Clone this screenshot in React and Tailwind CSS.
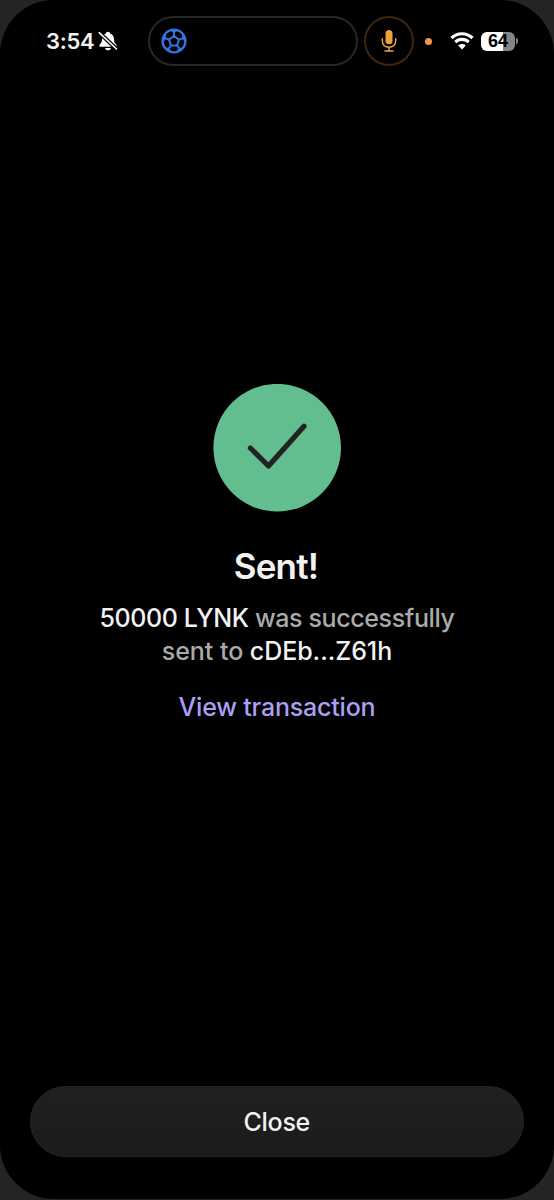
function MutedBell() {
  return (
    <svg className="ml-[4px]" width="20" height="20" viewBox="0 0 20 20">
      <path d="M10 .8c-1.200 0-2 .7-2.200 1.700C5.200 3.400 4.100 5.400 4 8.200c-.1 3-.8 4-2.200 5.300-.9.900-.5 2.300.7 2.300h15c1.200 0 1.600-1.400.7-2.300-1.400-1.300-2.100-2.300-2.200-5.300-.1-2.800-1.200-4.800-3.800-5.700C12 1.500 11.200.8 10 .8z" fill="white" />
      <path d="M7 17h6c-.3 1.400-1.500 2.300-3 2.300S7.300 18.400 7 17z" fill="white" />
      <path d="M1 1.500 18.500 18" stroke="black" strokeWidth="4" />
      <path d="M1.200 1.700 18.500 18" stroke="white" strokeWidth="1.600" strokeLinecap="round" />
    </svg>
  );
}

function Football() {
  return (
    <svg width="26" height="26" viewBox="0 0 26 26" fill="none" stroke="#3574e0" strokeWidth="2" strokeLinejoin="round">
      <circle cx="13" cy="13" r="11.400" strokeWidth="2.300" />
      <path d="m13 8 5 3.600-1.900 5.900H9.900L8 11.600z" />
      <path d="M13 8V4M18 11.600l3.600-1.200M16.100 17.500l2.200 3M9.900 17.500l-2.200 3M8 11.600l-3.600-1.200" />
      {/* outer patches */}
      <path d="M9.500 2.600 13 4.500l3.500-1.900zM22 7.100l-.8 3.500 2.800 2.800zM21.500 20l-3.500.2-1.800 3zM9.800 23.200 8 20.200 4.500 20zM2 13.400l2.800-2.800L4 7.100z" fill="#3574e0" strokeWidth="1" />
    </svg>
  );
}

function Mic() {
  return (
    <svg width="16" height="24" viewBox="0 0 16 24" fill="none" stroke="#eca33b" strokeWidth="1.500" strokeLinecap="round">
      <rect x="4.500" y="1" width="7" height="14.200" rx="3.500" fill="#eca33b" stroke="none" />
      <path d="M1.300 9.800v1.800c0 4 2.700 6.700 6.700 6.700s6.700-2.700 6.700-6.700V9.800M8 18.300v3.600M4 22h8" />
    </svg>
  );
}

function Wifi() {
  return (
    <svg width="24" height="18" viewBox="0 0 24 18" fill="none" stroke="white">
      <path d="M1.500 6C7.300.3 16.700.3 22.500 6" strokeWidth="3.200" />
      <path d="M5.300 10.100c3.700-3.600 9.700-3.600 13.400 0" strokeWidth="3.100" />
      <path d="M12 17.500 8.200 13.600c2.100-2 5.500-2 7.600 0z" fill="white" stroke="none" />
    </svg>
  );
}

function Battery() {
  return (
    <div className="ml-[7px] flex items-center">
      <div className="flex h-[19px] w-[34px] items-center justify-center rounded-[6px] bg-[linear-gradient(to_right,#fff_64%,#858585_64%)] font-['Liberation_Sans',sans-serif] text-[18px] leading-none font-bold text-black">
        64
      </div>
      <div className="ml-px h-[6px] w-[2px] rounded-r-full bg-[#858585]" />
    </div>
  );
}

function StatusBar() {
  return (
    <header className="flex h-[66px] pt-4 pl-[46px]">
      <div className="flex h-[50px] w-[102px] items-center">
        <span className="w-[48px] text-[22px] font-semibold tracking-[-0.3px] whitespace-nowrap">3:54</span>
        <MutedBell />
      </div>
      <div className="flex h-[50px] w-[210px] items-center rounded-full border-2 border-[#272727] pl-[11px]">
        <Football />
      </div>
      <div className="ml-[6px] flex h-[50px] w-[50px] items-center justify-center rounded-full border-2 border-[#3e260c]">
        <Mic />
      </div>
      <div className="flex h-[50px] items-center">
        <span className="mr-[18px] ml-[11px] h-[7px] w-[7px] rounded-full bg-[#f5964b]" />
        <Wifi />
        <Battery />
      </div>
    </header>
  );
}

export default function App() {
  return (
    <div className="h-[1200px] w-[554px] overflow-hidden bg-[#242424] font-['Inter',sans-serif] text-[#f2f2f2]">
      <div className="flex h-[1199px] flex-col rounded-[54px] bg-black">
        <StatusBar />
        <main className="flex flex-1 flex-col items-center pt-[318px] text-center">
          <svg width="128" height="128" viewBox="0 0 128 128">
            <circle cx="64.200" cy="63.700" r="63.800" fill="#62be8f" />
            <path d="m37.400 64 18.100 18L91 42.300" fill="none" stroke="#222222" strokeWidth="5.200" strokeLinecap="round" strokeLinejoin="round" />
          </svg>
          <h1 className="mt-[31px] mr-[2px] text-[35px] leading-[46px] font-semibold tracking-[-0.8px]">Sent!</h1>
          <p className="mt-[13px] w-[400px] text-[25px] leading-[33px] font-medium text-[#aaaaaa]">
            <span className="tracking-[-0.38px]">
              <span className="text-[#f2f2f2]">50000 LYNK</span> was successfully
            </span>
            <br />
            <span className="tracking-[-0.05px]">
              sent to <span className="text-[#f2f2f2]">cDEb...Z61h</span>
            </span>
          </p>
          <a href="#" className="mt-[23px] text-[25px] leading-[33px] font-medium tracking-[-0.2px] text-[#ab9ff2]">View transaction</a>
        </main>
        <button className="mr-[30px] mb-[42px] ml-[29.500px] h-[71px] rounded-full border border-[#252525] bg-linear-to-b from-[#202020] to-[#1b1b1b] pt-[2px] text-[25px] font-medium tracking-[-0.3px]">
          Close
        </button>
      </div>
    </div>
  );
}
